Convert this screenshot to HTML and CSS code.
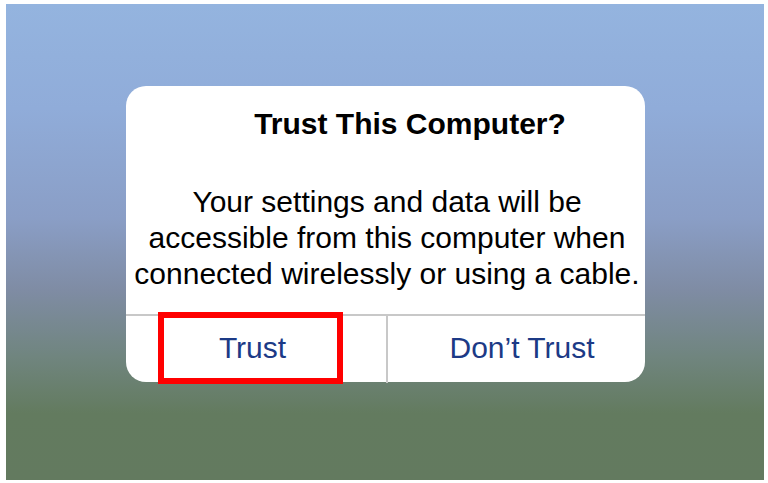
FILE: index.html
```html
<!DOCTYPE html>
<html lang="en">
<head>
    <meta charset="UTF-8">
    <meta name="viewport" content="width=device-width, initial-scale=1.0">
    <title>Trust This Computer?</title>
    <link rel="stylesheet" href="styles.css">
</head>
<body>
    <div class="screen">
        <div class="alert">
            <h2 class="alert-title">Trust This Computer?</h2>
            <p class="alert-message">Your settings and data will be<br>accessible from this computer when<br>connected wirelessly or using a cable.</p>
            <div class="alert-actions">
                <button class="alert-btn alert-btn-left">Trust</button>
                <button class="alert-btn alert-btn-right">Don’t Trust</button>
            </div>
            <!-- highlight drawn over the Trust button -->
            <div class="highlight"></div>
        </div>
    </div>
</body>
</html>
```

FILE: styles.css
```css
body { margin: 0; background: #fff; font-family: "Liberation Sans", Arial, sans-serif; }
.screen {
    margin: 4px 4px 3px 6px;
    height: 476px;
    padding-top: 82px;
    box-sizing: border-box;
    background: linear-gradient(to bottom, #94b4df 0%, #90acd9 22%, #8a9ec6 45%, #7f8ca4 60%, #70857f 74%, #637b5f 86%, #637a5f 100%);
}
.alert { position: relative; width: 519px; height: 296px; margin: 0 auto; background: #fff; border-radius: 20px; }
.alert-title { margin: 0; padding: 20px 0 0 50px; font-size: 30px; line-height: 36px; font-weight: bold; text-align: center; color: #000; }
.alert-message { margin: 42px 0 0; padding-left: 4px; font-size: 30px; line-height: 36px; text-align: center; color: #000; }
.alert-actions { display: flex; margin-top: 22px; border-top: 2px solid #c8c8c8; height: 67px; }
.alert-btn { padding: 0 0 4px; border: none; background: none; font-family: inherit; font-size: 30px; color: #1c3a86; cursor: pointer; }
.alert-btn-left { flex: 0 0 260px; padding-right: 6px; }
.alert-btn-right { flex: 1; padding-left: 12px; border-left: 2px solid #c8c8c8; }
.highlight { position: absolute; left: 32px; top: 226px; width: 185px; height: 72px; box-sizing: border-box; border: 6px solid #f00; }
```
